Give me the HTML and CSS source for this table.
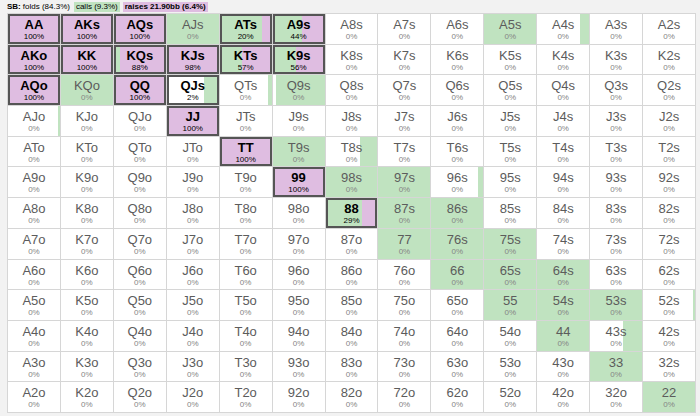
FILE: index.html
```html
<!DOCTYPE html>
<html>
<head>
<meta charset="utf-8">
<link rel="stylesheet" href="styles.css">
</head>
<body>
<div class="header">
  <span class="pos">SB:</span><span class="folds">folds (84.3%)</span>
  <span class="tag calls">calls (9.3%)</span>
  <span class="tag raises">raises 21.90bb (6.4%)</span>
</div>
<div class="grid">
  <!-- A row -->
  <div class="c r hl"><span class="n">AA</span><span class="p">100%</span></div>
  <div class="c r hl"><span class="n">AKs</span><span class="p">100%</span></div>
  <div class="c r hl"><span class="n">AQs</span><span class="p">100%</span></div>
  <div class="c g"><span class="n">AJs</span><span class="p">0%</span></div>
  <div class="c m hl" style="--f:0%;--c:80%"><span class="n">ATs</span><span class="p">20%</span></div>
  <div class="c m hl" style="--f:0%;--c:56%"><span class="n">A9s</span><span class="p">44%</span></div>
  <div class="c"><span class="n">A8s</span><span class="p">0%</span></div>
  <div class="c"><span class="n">A7s</span><span class="p">0%</span></div>
  <div class="c"><span class="n">A6s</span><span class="p">0%</span></div>
  <div class="c g"><span class="n">A5s</span><span class="p">0%</span></div>
  <div class="c m" style="--f:83%;--c:100%"><span class="n">A4s</span><span class="p">0%</span></div>
  <div class="c"><span class="n">A3s</span><span class="p">0%</span></div>
  <div class="c"><span class="n">A2s</span><span class="p">0%</span></div>
  <!-- K row -->
  <div class="c r hl"><span class="n">AKo</span><span class="p">100%</span></div>
  <div class="c r hl"><span class="n">KK</span><span class="p">100%</span></div>
  <div class="c m hl" style="--f:0%;--c:12%"><span class="n">KQs</span><span class="p">88%</span></div>
  <div class="c m hl" style="--f:0%;--c:2%"><span class="n">KJs</span><span class="p">98%</span></div>
  <div class="c m hl" style="--f:0%;--c:43%"><span class="n">KTs</span><span class="p">57%</span></div>
  <div class="c m hl" style="--f:0%;--c:44%"><span class="n">K9s</span><span class="p">56%</span></div>
  <div class="c"><span class="n">K8s</span><span class="p">0%</span></div>
  <div class="c"><span class="n">K7s</span><span class="p">0%</span></div>
  <div class="c"><span class="n">K6s</span><span class="p">0%</span></div>
  <div class="c"><span class="n">K5s</span><span class="p">0%</span></div>
  <div class="c"><span class="n">K4s</span><span class="p">0%</span></div>
  <div class="c"><span class="n">K3s</span><span class="p">0%</span></div>
  <div class="c"><span class="n">K2s</span><span class="p">0%</span></div>
  <!-- Q row -->
  <div class="c r hl"><span class="n">AQo</span><span class="p">100%</span></div>
  <div class="c g"><span class="n">KQo</span><span class="p">0%</span></div>
  <div class="c r hl"><span class="n">QQ</span><span class="p">100%</span></div>
  <div class="c m hl" style="--f:71%;--c:98%"><span class="n">QJs</span><span class="p">2%</span></div>
  <div class="c m" style="--f:92%;--c:100%"><span class="n">QTs</span><span class="p">0%</span></div>
  <div class="c m" style="--f:5%;--c:100%"><span class="n">Q9s</span><span class="p">0%</span></div>
  <div class="c"><span class="n">Q8s</span><span class="p">0%</span></div>
  <div class="c"><span class="n">Q7s</span><span class="p">0%</span></div>
  <div class="c"><span class="n">Q6s</span><span class="p">0%</span></div>
  <div class="c"><span class="n">Q5s</span><span class="p">0%</span></div>
  <div class="c"><span class="n">Q4s</span><span class="p">0%</span></div>
  <div class="c"><span class="n">Q3s</span><span class="p">0%</span></div>
  <div class="c"><span class="n">Q2s</span><span class="p">0%</span></div>
  <!-- J row -->
  <div class="c m" style="--f:97%;--c:100%"><span class="n">AJo</span><span class="p">0%</span></div>
  <div class="c"><span class="n">KJo</span><span class="p">0%</span></div>
  <div class="c"><span class="n">QJo</span><span class="p">0%</span></div>
  <div class="c r hl"><span class="n">JJ</span><span class="p">100%</span></div>
  <div class="c"><span class="n">JTs</span><span class="p">0%</span></div>
  <div class="c"><span class="n">J9s</span><span class="p">0%</span></div>
  <div class="c"><span class="n">J8s</span><span class="p">0%</span></div>
  <div class="c"><span class="n">J7s</span><span class="p">0%</span></div>
  <div class="c"><span class="n">J6s</span><span class="p">0%</span></div>
  <div class="c"><span class="n">J5s</span><span class="p">0%</span></div>
  <div class="c"><span class="n">J4s</span><span class="p">0%</span></div>
  <div class="c"><span class="n">J3s</span><span class="p">0%</span></div>
  <div class="c"><span class="n">J2s</span><span class="p">0%</span></div>
  <!-- T row -->
  <div class="c"><span class="n">ATo</span><span class="p">0%</span></div>
  <div class="c"><span class="n">KTo</span><span class="p">0%</span></div>
  <div class="c"><span class="n">QTo</span><span class="p">0%</span></div>
  <div class="c"><span class="n">JTo</span><span class="p">0%</span></div>
  <div class="c r hl"><span class="n">TT</span><span class="p">100%</span></div>
  <div class="c g"><span class="n">T9s</span><span class="p">0%</span></div>
  <div class="c m" style="--f:66%;--c:100%"><span class="n">T8s</span><span class="p">0%</span></div>
  <div class="c"><span class="n">T7s</span><span class="p">0%</span></div>
  <div class="c"><span class="n">T6s</span><span class="p">0%</span></div>
  <div class="c"><span class="n">T5s</span><span class="p">0%</span></div>
  <div class="c"><span class="n">T4s</span><span class="p">0%</span></div>
  <div class="c"><span class="n">T3s</span><span class="p">0%</span></div>
  <div class="c"><span class="n">T2s</span><span class="p">0%</span></div>
  <!-- 9 row -->
  <div class="c"><span class="n">A9o</span><span class="p">0%</span></div>
  <div class="c"><span class="n">K9o</span><span class="p">0%</span></div>
  <div class="c"><span class="n">Q9o</span><span class="p">0%</span></div>
  <div class="c"><span class="n">J9o</span><span class="p">0%</span></div>
  <div class="c"><span class="n">T9o</span><span class="p">0%</span></div>
  <div class="c r hl"><span class="n">99</span><span class="p">100%</span></div>
  <div class="c g"><span class="n">98s</span><span class="p">0%</span></div>
  <div class="c g"><span class="n">97s</span><span class="p">0%</span></div>
  <div class="c m" style="--f:91%;--c:100%"><span class="n">96s</span><span class="p">0%</span></div>
  <div class="c"><span class="n">95s</span><span class="p">0%</span></div>
  <div class="c"><span class="n">94s</span><span class="p">0%</span></div>
  <div class="c"><span class="n">93s</span><span class="p">0%</span></div>
  <div class="c"><span class="n">92s</span><span class="p">0%</span></div>
  <!-- 8 row -->
  <div class="c"><span class="n">A8o</span><span class="p">0%</span></div>
  <div class="c"><span class="n">K8o</span><span class="p">0%</span></div>
  <div class="c"><span class="n">Q8o</span><span class="p">0%</span></div>
  <div class="c"><span class="n">J8o</span><span class="p">0%</span></div>
  <div class="c"><span class="n">T8o</span><span class="p">0%</span></div>
  <div class="c"><span class="n">98o</span><span class="p">0%</span></div>
  <div class="c m hl" style="--f:0%;--c:71%"><span class="n">88</span><span class="p">29%</span></div>
  <div class="c g"><span class="n">87s</span><span class="p">0%</span></div>
  <div class="c g"><span class="n">86s</span><span class="p">0%</span></div>
  <div class="c"><span class="n">85s</span><span class="p">0%</span></div>
  <div class="c"><span class="n">84s</span><span class="p">0%</span></div>
  <div class="c"><span class="n">83s</span><span class="p">0%</span></div>
  <div class="c"><span class="n">82s</span><span class="p">0%</span></div>
  <!-- 7 row -->
  <div class="c"><span class="n">A7o</span><span class="p">0%</span></div>
  <div class="c"><span class="n">K7o</span><span class="p">0%</span></div>
  <div class="c"><span class="n">Q7o</span><span class="p">0%</span></div>
  <div class="c"><span class="n">J7o</span><span class="p">0%</span></div>
  <div class="c"><span class="n">T7o</span><span class="p">0%</span></div>
  <div class="c"><span class="n">97o</span><span class="p">0%</span></div>
  <div class="c"><span class="n">87o</span><span class="p">0%</span></div>
  <div class="c g"><span class="n">77</span><span class="p">0%</span></div>
  <div class="c g"><span class="n">76s</span><span class="p">0%</span></div>
  <div class="c g"><span class="n">75s</span><span class="p">0%</span></div>
  <div class="c"><span class="n">74s</span><span class="p">0%</span></div>
  <div class="c"><span class="n">73s</span><span class="p">0%</span></div>
  <div class="c"><span class="n">72s</span><span class="p">0%</span></div>
  <!-- 6 row -->
  <div class="c"><span class="n">A6o</span><span class="p">0%</span></div>
  <div class="c"><span class="n">K6o</span><span class="p">0%</span></div>
  <div class="c"><span class="n">Q6o</span><span class="p">0%</span></div>
  <div class="c"><span class="n">J6o</span><span class="p">0%</span></div>
  <div class="c"><span class="n">T6o</span><span class="p">0%</span></div>
  <div class="c"><span class="n">96o</span><span class="p">0%</span></div>
  <div class="c"><span class="n">86o</span><span class="p">0%</span></div>
  <div class="c"><span class="n">76o</span><span class="p">0%</span></div>
  <div class="c g"><span class="n">66</span><span class="p">0%</span></div>
  <div class="c g"><span class="n">65s</span><span class="p">0%</span></div>
  <div class="c g"><span class="n">64s</span><span class="p">0%</span></div>
  <div class="c"><span class="n">63s</span><span class="p">0%</span></div>
  <div class="c"><span class="n">62s</span><span class="p">0%</span></div>
  <!-- 5 row -->
  <div class="c"><span class="n">A5o</span><span class="p">0%</span></div>
  <div class="c"><span class="n">K5o</span><span class="p">0%</span></div>
  <div class="c"><span class="n">Q5o</span><span class="p">0%</span></div>
  <div class="c"><span class="n">J5o</span><span class="p">0%</span></div>
  <div class="c"><span class="n">T5o</span><span class="p">0%</span></div>
  <div class="c"><span class="n">95o</span><span class="p">0%</span></div>
  <div class="c"><span class="n">85o</span><span class="p">0%</span></div>
  <div class="c"><span class="n">75o</span><span class="p">0%</span></div>
  <div class="c"><span class="n">65o</span><span class="p">0%</span></div>
  <div class="c g"><span class="n">55</span><span class="p">0%</span></div>
  <div class="c g"><span class="n">54s</span><span class="p">0%</span></div>
  <div class="c g"><span class="n">53s</span><span class="p">0%</span></div>
  <div class="c m" style="--f:97%;--c:100%"><span class="n">52s</span><span class="p">0%</span></div>
  <!-- 4 row -->
  <div class="c"><span class="n">A4o</span><span class="p">0%</span></div>
  <div class="c"><span class="n">K4o</span><span class="p">0%</span></div>
  <div class="c"><span class="n">Q4o</span><span class="p">0%</span></div>
  <div class="c"><span class="n">J4o</span><span class="p">0%</span></div>
  <div class="c"><span class="n">T4o</span><span class="p">0%</span></div>
  <div class="c"><span class="n">94o</span><span class="p">0%</span></div>
  <div class="c"><span class="n">84o</span><span class="p">0%</span></div>
  <div class="c"><span class="n">74o</span><span class="p">0%</span></div>
  <div class="c"><span class="n">64o</span><span class="p">0%</span></div>
  <div class="c"><span class="n">54o</span><span class="p">0%</span></div>
  <div class="c g"><span class="n">44</span><span class="p">0%</span></div>
  <div class="c m" style="--f:64%;--c:100%"><span class="n">43s</span><span class="p">0%</span></div>
  <div class="c"><span class="n">42s</span><span class="p">0%</span></div>
  <!-- 3 row -->
  <div class="c"><span class="n">A3o</span><span class="p">0%</span></div>
  <div class="c"><span class="n">K3o</span><span class="p">0%</span></div>
  <div class="c"><span class="n">Q3o</span><span class="p">0%</span></div>
  <div class="c"><span class="n">J3o</span><span class="p">0%</span></div>
  <div class="c"><span class="n">T3o</span><span class="p">0%</span></div>
  <div class="c"><span class="n">93o</span><span class="p">0%</span></div>
  <div class="c"><span class="n">83o</span><span class="p">0%</span></div>
  <div class="c"><span class="n">73o</span><span class="p">0%</span></div>
  <div class="c"><span class="n">63o</span><span class="p">0%</span></div>
  <div class="c"><span class="n">53o</span><span class="p">0%</span></div>
  <div class="c"><span class="n">43o</span><span class="p">0%</span></div>
  <div class="c g"><span class="n">33</span><span class="p">0%</span></div>
  <div class="c"><span class="n">32s</span><span class="p">0%</span></div>
  <!-- 2 row -->
  <div class="c"><span class="n">A2o</span><span class="p">0%</span></div>
  <div class="c"><span class="n">K2o</span><span class="p">0%</span></div>
  <div class="c"><span class="n">Q2o</span><span class="p">0%</span></div>
  <div class="c"><span class="n">J2o</span><span class="p">0%</span></div>
  <div class="c"><span class="n">T2o</span><span class="p">0%</span></div>
  <div class="c"><span class="n">92o</span><span class="p">0%</span></div>
  <div class="c"><span class="n">82o</span><span class="p">0%</span></div>
  <div class="c"><span class="n">72o</span><span class="p">0%</span></div>
  <div class="c"><span class="n">62o</span><span class="p">0%</span></div>
  <div class="c"><span class="n">52o</span><span class="p">0%</span></div>
  <div class="c"><span class="n">42o</span><span class="p">0%</span></div>
  <div class="c"><span class="n">32o</span><span class="p">0%</span></div>
  <div class="c g"><span class="n">22</span><span class="p">0%</span></div>
</div>
</body>
</html>
```

FILE: styles.css
```css
:root {
  --green: #c0e3c0;
  --pink: #dfbde1;
  --line: #d6d6d6;
}
html, body {
  margin: 0;
  padding: 0;
  background: #f2f2f2;
  font-family: "Liberation Sans", Arial, sans-serif;
}
.header {
  height: 13px;
  padding-left: 7px;
  display: flex;
  align-items: center;
  font-size: 8px;
  line-height: 10px;
  color: #000;
  white-space: nowrap;
}
.pos {
  font-weight: bold;
  margin-right: 2px;
}
.folds {
  margin-right: 4px;
}
.tag {
  padding: 0 2px;
  margin-right: 3px;
}
.calls {
  background: var(--green);
}
.raises {
  background: var(--pink);
  font-weight: bold;
}
.grid {
  margin-left: 7px;
  width: 689px;
  height: 400px;
  box-sizing: border-box;
  padding: 1px;
  background: var(--line);
  display: grid;
  grid-template-columns: repeat(13, 1fr);
  grid-template-rows: repeat(13, 1fr);
  gap: 1px;
}
.c {
  background: #fff;
  display: flex;
  flex-direction: column;
  align-items: center;
  padding-top: 4px;
  box-sizing: border-box;
  min-width: 0;
  overflow: hidden;
}
.c.g {
  background: var(--green);
}
.c.r {
  background: var(--pink);
}
.c.m {
  background: linear-gradient(to right,
    #fff 0, #fff var(--f),
    var(--green) var(--f), var(--green) var(--c),
    var(--pink) var(--c), var(--pink) 100%);
}
.n {
  font-size: 13px;
  line-height: 14px;
  color: #5c5c5c;
}
.p {
  font-size: 8px;
  line-height: 10px;
  color: #858585;
}
.c.hl {
  box-shadow: inset 0 0 0 2px #555;
}
.c.hl .n {
  font-weight: bold;
  color: #000;
}
.c.hl .p {
  color: #000;
}
```
